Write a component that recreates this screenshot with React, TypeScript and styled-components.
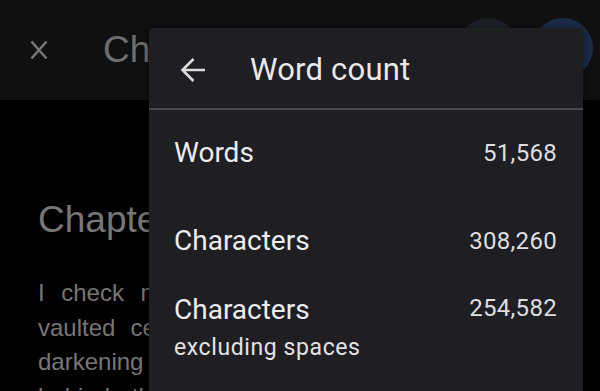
import React from "react";
import styled, { createGlobalStyle } from "styled-components";

const Global = createGlobalStyle`
  html, body { margin: 0; padding: 0; background: #000; }
  body { width: 600px; height: 391px; overflow: hidden; font-family: Roboto, "Liberation Sans", sans-serif; }
  #root { position: relative; width: 600px; height: 391px; overflow: hidden; }
`;

const Page = styled.div`
  display: flex;
  flex-direction: column;
  width: 600px;
  height: 391px;
  overflow: hidden;
  background: #000;
`;

const TopBar = styled.header`
  display: flex;
  align-items: center;
  flex-shrink: 0;
  height: 100px;
  padding: 0 7px 0 30px;
  box-sizing: border-box;
  background: #101010;
`;

const CloseButton = styled.div`
  display: flex;
  width: 18px;
  height: 22px;
  color: #767676;
`;

const DocTitle = styled.div`
  margin-left: 55px;
  font-family: "Liberation Sans", Arial, sans-serif;
  font-size: 37px;
  color: #6e6e6e;
  white-space: nowrap;
`;

const Avatars = styled.div`
  display: flex;
  gap: 15px;
  margin-left: auto;
  align-self: flex-start;
  margin-top: 18px;
`;

const Avatar = styled.div<{ $tone: string }>`
  width: 60px;
  height: 60px;
  border-radius: 50%;
  background: ${(p) => p.$tone};
`;

const Body = styled.main`
  display: flex;
  flex-direction: column;
  flex-shrink: 0;
  padding: 0 38px;
  font-family: "Liberation Sans", Arial, sans-serif;
  color: #767676;
`;

const ChapterHeading = styled.h1`
  margin: 98px 0 0;
  font-size: 37px;
  font-weight: 400;
  line-height: 44px;
  white-space: nowrap;
`;

const Paragraph = styled.div`
  margin-top: 34px;
  display: flex;
  flex-direction: column;
`;

const Line = styled.div`
  font-size: 24px;
  line-height: 34.5px;
  text-align: justify;
  text-align-last: justify;
  white-space: nowrap;
`;

const Panel = styled.section`
  position: absolute;
  left: 149px;
  top: 28px;
  width: 434px;
  height: 420px;
  background: #1f1e23;
  border-radius: 4px;
  box-shadow: 0 2px 8px rgba(0, 0, 0, 0.5);
  display: flex;
  flex-direction: column;
  color: #e8e8ea;
`;

const PanelHeader = styled.div`
  display: flex;
  align-items: center;
  box-sizing: border-box;
  height: 82px;
  padding: 4px 0 0 31px;
  border-bottom: 2px solid #48484d;
  flex-shrink: 0;
`;

const BackIcon = styled.div`
  display: flex;
  width: 26px;
  height: 26px;
  color: #dcdcde;
`;

const PanelTitle = styled.div`
  margin-left: 44px;
  font-size: 31px;
  font-weight: 400;
  letter-spacing: 0.2px;
  line-height: 36px;
`;

const StatRow = styled.div<{ $h?: number }>`
  display: flex;
  justify-content: space-between;
  align-items: ${(p) => (p.$h ? "center" : "flex-start")};
  height: ${(p) => (p.$h ? `${p.$h}px` : "auto")};
  padding: ${(p) => (p.$h ? "0 26px 0 25px" : "7px 26px 0 25px")};
  flex-shrink: 0;
`;

const LabelGroup = styled.div`
  display: flex;
  flex-direction: column;
`;

const Label = styled.div`
  font-size: 28px;
  line-height: 34px;
  color: #ececee;
`;

const SubLabel = styled.div`
  font-size: 23px;
  letter-spacing: 0.6px;
  line-height: 30px;
  margin-top: 6px;
  color: #e2e2e4;
`;

const Value = styled.div<{ $top?: boolean }>`
  font-size: 24px;
  line-height: 34px;
  color: #dedee0;
  letter-spacing: 0.3px;
  margin-top: ${(p) => (p.$top ? "-2px" : "0")};
`;

const stats = [
  { label: "Words", value: "51,568", h: 86 },
  { label: "Characters", value: "308,260", h: 90 },
];

export default function App() {
  return (
    <>
      <Global />
      <Page>
        <TopBar>
          <CloseButton>
            <svg viewBox="0 0 18 22" width="18" height="22">
              <path d="M1.5 2.5 L16.5 19.5 M16.5 2.5 L1.5 19.5" stroke="currentColor" strokeWidth="2.6" fill="none" />
            </svg>
          </CloseButton>
          <DocTitle>Chapter 1</DocTitle>
          <Avatars>
            <Avatar $tone="#1c1f27" />
            <Avatar $tone="#1b2a46" />
          </Avatars>
        </TopBar>
        <Body>
          <ChapterHeading>Chapter 1</ChapterHeading>
          <Paragraph>
            <Line>I check my watch and then look up at the</Line>
            <Line>vaulted ceiling of the old cathedral, its stone</Line>
            <Line>darkening with the last light slipping in from</Line>
            <Line>behind the tall stained glass of the west</Line>
          </Paragraph>
        </Body>
      </Page>
      <Panel>
        <PanelHeader>
          <BackIcon>
            <svg viewBox="0 0 26 26" width="26" height="26">
              <path d="M25 13 H3 M13.5 2 L2.5 13 L13.5 24" stroke="currentColor" strokeWidth="2.6" fill="none" strokeLinejoin="miter" />
            </svg>
          </BackIcon>
          <PanelTitle>Word count</PanelTitle>
        </PanelHeader>
        {stats.map((s) => (
          <StatRow key={s.label} $h={s.h}>
            <Label>{s.label}</Label>
            <Value>{s.value}</Value>
          </StatRow>
        ))}
        <StatRow>
          <LabelGroup>
            <Label>Characters</Label>
            <SubLabel>excluding spaces</SubLabel>
          </LabelGroup>
          <Value $top>254,582</Value>
        </StatRow>
      </Panel>
    </>
  );
}
